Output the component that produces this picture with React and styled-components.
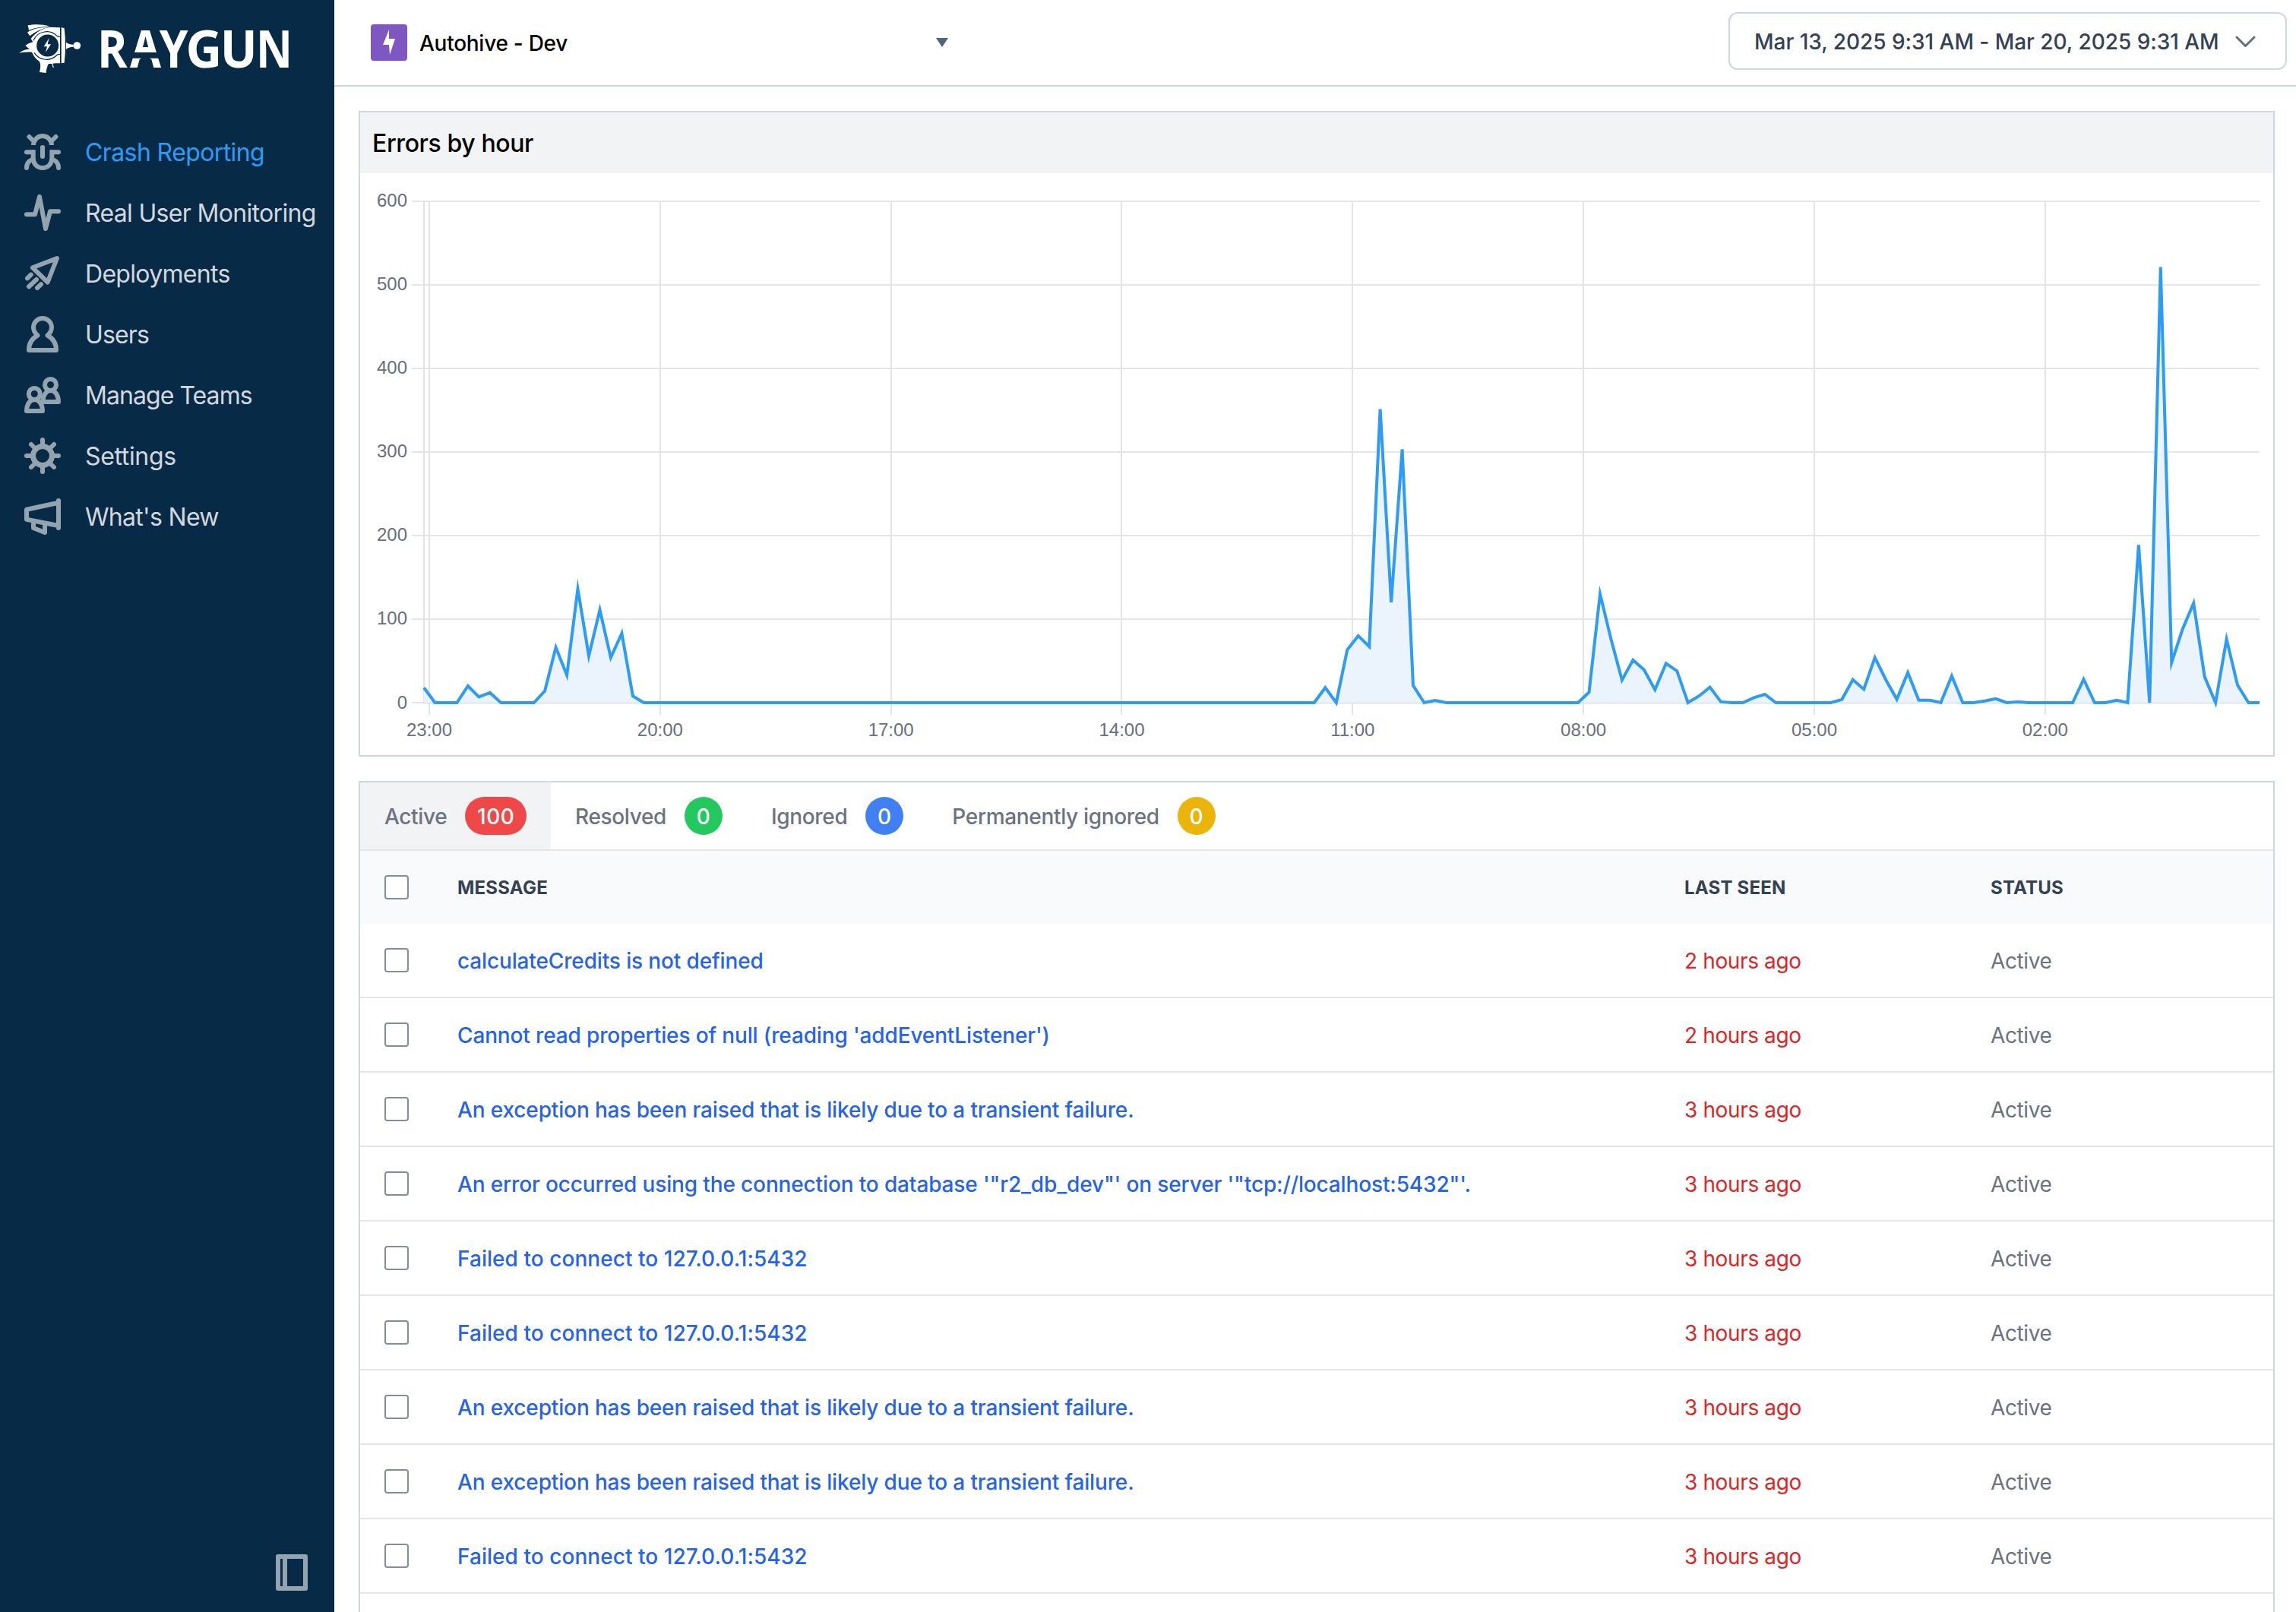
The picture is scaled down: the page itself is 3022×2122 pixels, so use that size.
import React, { useState } from "react";
import styled, { createGlobalStyle } from "styled-components";

const GlobalStyle = createGlobalStyle`
  * {
    box-sizing: border-box;
  }

  body {
    margin: 0;
    background: #fff;
    font-family: Inter, "Liberation Sans", sans-serif;
    -webkit-font-smoothing: antialiased;
  }
`;

const Page = styled.div`
  display: flex;
  width: 3022px;
  height: 2122px;
  overflow: hidden;
`;

const Sidebar = styled.aside`
  display: flex;
  flex-direction: column;
  flex: none;
  width: 440px;
  background: #072a47;
`;

const LogoLink = styled.a`
  display: block;
  height: 160px;
`;

const Nav = styled.nav`
  display: flex;
  flex-direction: column;
  flex: 1;
`;

const NavItem = styled.a`
  display: flex;
  align-items: center;
  gap: 32px;
  height: 80px;
  padding-left: 32px;
  font-size: 32px;
  letter-spacing: ${({ $tracking }) => $tracking}px;
  white-space: nowrap;
  cursor: pointer;
  color: ${({ $active }) => ($active ? "#2e9bf4" : "#d3d8dd")};
`;

const NavLabel = styled.span`
  padding-top: 1px;
`;

const StrokeIcon = styled.svg`
  flex: none;
  fill: none;
  stroke: #93a4ae;
  stroke-width: 6;
  stroke-linecap: round;
  stroke-linejoin: round;
`;

const SidebarFooter = styled.div`
  display: flex;
  justify-content: flex-end;
  padding: 0 35px 28px 0;
`;

const Main = styled.main`
  display: flex;
  flex-direction: column;
  flex: 1;
  min-width: 0;
`;

const TopBar = styled.header`
  display: flex;
  justify-content: space-between;
  flex: none;
  height: 114px;
  padding: 16px 12px 0 48px;
  border-bottom: 2px solid #d0d6dd;
`;

const AppPicker = styled.div`
  display: flex;
  align-items: center;
  width: 760px;
  height: 80px;
`;

const AppIcon = styled.span`
  display: flex;
  align-items: center;
  justify-content: center;
  width: 48px;
  height: 48px;
  border-radius: 4px;
  background: #7e57c2;
`;

const AppName = styled.span`
  flex: 1;
  padding: 2px 0 0 16px;
  font-size: 28px;
  font-weight: 500;
  letter-spacing: -0.27px;
  color: #000;
`;

const DateRange = styled.button`
  display: flex;
  align-items: center;
  justify-content: space-between;
  width: 735px;
  height: 76px;
  padding: 2px 39px 0 32px;
  border: 2px solid #d0d6dd;
  border-radius: 12px;
  background: #fff;
  font-family: inherit;
  font-size: 28px;
  font-weight: 500;
  letter-spacing: -0.03px;
  white-space: nowrap;
  color: #334155;
`;

const Content = styled.div`
  display: flex;
  flex-direction: column;
  gap: 32px;
  padding: 32px 28px 0 32px;
`;

const Panel = styled.section`
  flex: none;
  border: 2px solid #d0d6dd;
  background: #fff;
`;

const PanelTitle = styled.h2`
  display: flex;
  align-items: center;
  height: 80px;
  margin: 0;
  padding: 1px 0 0 16px;
  background: #f2f3f5;
  font-size: 32px;
  font-weight: 500;
  letter-spacing: -0.4px;
  color: #000;
`;

const ChartSvg = styled.svg`
  display: block;

  text {
    font-family: "Liberation Sans", Arial, sans-serif;
    font-size: 24px;
    fill: #666f7b;
  }
`;

const Tabs = styled.div`
  display: flex;
  height: 90px;
  border-bottom: 2px solid #e5e5e5;
`;

const Tab = styled.button`
  display: flex;
  align-items: center;
  gap: 24px;
  padding: 0 32px;
  border: none;
  background: ${({ $active }) => ($active ? "#f2f3f5" : "transparent")};
  font-family: inherit;
  font-size: 28px;
  font-weight: 500;
  letter-spacing: -0.34px;
  color: #6b7280;
  cursor: pointer;
`;

const TabLabel = styled.span`
  padding-top: 2px;
`;

const TabBadge = styled.span`
  display: flex;
  align-items: center;
  justify-content: center;
  min-width: 49.5px;
  height: 50px;
  padding: 2px 15.7px 0;
  border-radius: 25px;
  background: ${({ $color }) => $color};
  letter-spacing: 0.5px;
  color: #fff;
`;

const Row = styled.div`
  display: grid;
  grid-template-columns: 96px 1615px 403px 1fr;
  align-items: center;
  height: 98px;
  padding: 0 0 0 32px;
  border-bottom: 2px solid #e5e5e5;
  font-size: 28px;
  letter-spacing: -0.37px;
  white-space: nowrap;
`;

const HeadRow = styled(Row)`
  height: 96px;
  border-bottom: none;
  background: #f9fafc;
  font-size: 24px;
  font-weight: 700;
  letter-spacing: 0.2px;
  text-transform: uppercase;
  color: #334155;
`;

const Checkbox = styled.input`
  appearance: none;
  width: 32px;
  height: 32px;
  margin: 0;
  border: 2px solid #858d99;
  border-radius: 4px;
  background: #fff;
`;

const Message = styled.a`
  padding-top: 2px;
  font-weight: 500;
  letter-spacing: ${({ $tracking }) => $tracking ?? -0.14}px;
  color: #2563eb;
`;

const LastSeen = styled.span`
  padding-top: 2px;
  color: #dc2626;
`;

const Status = styled.span`
  padding-top: 2px;
  color: #6b7280;
`;

// letter, x, horizontal scale
const LETTERS = [
  ["R", 383.8, 0.883],
  ["A", 513, 0.872],
  ["Y", 629, 0.888],
  ["G", 733.5, 0.968],
  ["U", 869.5, 0.95],
  ["N", 1011, 0.865],
];

function Logo() {
  return (
    <svg width="440" height="110" viewBox="0 0 1320 330" fill="#fff">
      {/* fins */}
      <path d="M110 100C135 95 168 95 196 104C165 105 135 110 114 119Z" />
      <path d="M108 128C125 114 160 107 192 107C165 113 140 124 118 142Z" />
      {/* body */}
      <path d="M122 153C140 128 172 107 202 107L237 109V250C225 250 214 250 208 251L213 266L209 267L205 252L192 252C186 262 183 274 182 288L156 285C160 270 162 256 156 243C142 234 132 220 126 206C108 205 92 206 76 209C88 199 103 194 117 194L100 180C110 173 120 168 130 166Z" />
      <path d="M242 108L254 112Q262 180 254 248L242 250Z" />
      <path d="M261 167Q272 176 290 176V185Q272 185 261 194Z" />
      <circle cx="304" cy="180" r="14.5" />
      {/* lens */}
      <path
        d="M132 160A57 57 0 0 1 226 143L238 145M135 208A57 57 0 0 0 226 216L238 214"
        fill="none"
        stroke="#072a47"
        strokeWidth="3.5"
      />
      <circle cx="188" cy="180" r="47" fill="#072a47" />
      <circle cx="188" cy="180" r="46" fill="none" stroke="#fff" strokeWidth="5" />
      <path d="M194 150L173 184H186L180 207L201 175H188Z" />
      {/* wordmark */}
      {LETTERS.map(([letter, x, scale]) => (
        <text
          key={letter}
          transform={`translate(${x} 268) scale(${scale} 1)`}
          fontFamily="Open Sans, sans-serif"
          fontWeight="700"
          fontSize="204.5"
        >
          {letter}
        </text>
      ))}
      {/* split through the A */}
      <path d="M510 207H645V230H510ZM556 228H593V238H556Z" fill="#072a47" />
      <path d="M548 186H602V207H548Z" />
    </svg>
  );
}

const ICONS = {
  bug: (
    <>
      <path d="M12 15A12 12 0 0 1 36 15" strokeLinecap="butt" />
      <path d="M6.5 4L11.5 9M41.5 4L36.5 9M24 18V30" />
      <path d="M3 24.3H11M45 24.3H37" />
      <path d="M11.7 21.3V32C11.7 40 17 45 24 45S36.3 40 36.3 32V21.3" strokeLinecap="butt" />
      <path d="M3 45C3 40 5 36.5 9.5 34.5M45 45C45 40 43 36.5 38.5 34.5" />
    </>
  ),
  pulse: <path d="M3 26.3H14L20 3L28 45L34 22.3H45" />,
  rocket: (
    <path d="M43 4L11 16.3L30.7 35.5ZM4 30.3L8.7 25.7M6 41.3L16 32M17 43L22 38.3" />
  ),
  user: (
    <path d="M6 45C6 35 11 29 17.5 25.5C14 22.5 12 19 12 15A12 12 0 0 1 36 15C36 19 34 22.5 30.5 25.5C37 29 42 35 42 45Z" />
  ),
  team: (
    <>
      <circle cx="34.5" cy="10.5" r="7.5" />
      <circle cx="13.3" cy="22.5" r="7.5" />
      <path d="M24.5 33H45C45 25 41 18 34.7 18S24.5 25 24.5 33Z" />
      <path d="M3 45H24C24 37 20 30 13.5 30S3 37 3 45Z" />
    </>
  ),
  gear: (
    <>
      <circle cx="24" cy="24" r="12.5" strokeWidth="7" />
      <path d="M24 3V10M24 38V45M3 24H10M38 24H45M9 9L14 14M34 34L39 39M39 9L34 14M14 34L9 39" />
    </>
  ),
  megaphone: <path d="M45 3V39M45 5.7L3 14.7V27.7L45 36M12 31V39L27 45V34" />,
};

const NAV_ITEMS = [
  { icon: "bug", label: "Crash Reporting", tracking: -0.6 },
  { icon: "pulse", label: "Real User Monitoring", tracking: -0.67 },
  { icon: "rocket", label: "Deployments", tracking: -0.7 },
  { icon: "user", label: "Users", tracking: -0.85 },
  { icon: "team", label: "Manage Teams", tracking: -0.95 },
  { icon: "gear", label: "Settings", tracking: -0.35 },
  { icon: "megaphone", label: "What's New", tracking: -0.7 },
];

const zeros = (n) => Array(n).fill(0);

// error counts, one point for every step of the time axis
const POINTS = [
  18, 0, 0, 0, 20, 7, 12, 0, 0, 0, 0, 14, 66, 33, 136, 56, 111, 54, 83, 8,
  ...zeros(62),
  18, 0, 63, 80, 67, 351, 120, 303, 20.5, 0, 2.7,
  ...zeros(13),
  12.5, 130, 76, 27, 51, 39.5, 15.5, 47, 38, 0, 8, 18.5, 1, 0, 0, 6, 10,
  ...zeros(6),
  3.8, 27.5, 16, 54, 27.5, 4, 36, 3, 3, 0, 32, 0, 0, 2, 4.6, 0, 1, 0, 0, 0, 0, 0,
  28, 0, 0, 3, 0, 188.5, 0, 521, 48, 88, 119, 31, 0, 76, 21, 0, 0,
];

const Y_TICKS = [600, 500, 400, 300, 200, 100, 0];
const X_TICKS = ["23:00", "20:00", "17:00", "14:00", "11:00", "08:00", "05:00", "02:00"];

const plot = { left: 84, right: 2500, top: 36.5, bottom: 697 };

function ErrorsChart() {
  const step = (plot.right - plot.left) / (POINTS.length - 1);
  const yOf = (value) => plot.bottom - (value * (plot.bottom - plot.top)) / 600;
  const xOfTick = (i) => 91 + i * 303.83;
  const line = POINTS.map((v, i) => `${(plot.left + i * step).toFixed(1)},${yOf(v).toFixed(1)}`).join(" ");

  return (
    <ChartSvg width="2518" height="766">
      <g stroke="#e5e5e6" strokeWidth="2">
        {Y_TICKS.map((tick) => (
          <line key={tick} x1="68" x2={plot.right} y1={Math.round(yOf(tick))} y2={Math.round(yOf(tick))} />
        ))}
        {X_TICKS.map((tick, i) => (
          <line key={tick} x1={Math.round(xOfTick(i))} x2={Math.round(xOfTick(i))} y1={plot.top} y2="713" />
        ))}
        <line x1={plot.left} x2={plot.left} y1={plot.top} y2={plot.bottom} />
      </g>
      <polygon points={`${plot.left},${plot.bottom} ${line} ${plot.right},${plot.bottom}`} fill="#ebf3fd" />
      <line x1={plot.left} x2={plot.right} y1="697.5" y2="697.5" stroke="#cdd5dd" />
      <polyline points={line} fill="none" stroke="#2e9bf4" strokeWidth="4" strokeMiterlimit="10" />
      {Y_TICKS.map((tick) => (
        <text key={tick} x="62" y={yOf(tick) + 7.5} textAnchor="end">
          {tick}
        </text>
      ))}
      {X_TICKS.map((tick, i) => (
        <text key={tick} x={xOfTick(i)} y="741" textAnchor="middle">
          {tick}
        </text>
      ))}
    </ChartSvg>
  );
}

const TABS = [
  { label: "Active", count: 100, color: "#ef4848" },
  { label: "Resolved", count: 0, color: "#25c75f" },
  { label: "Ignored", count: 0, color: "#4080f3" },
  { label: "Permanently ignored", count: 0, color: "#eab40b" },
];

const TRANSIENT = "An exception has been raised that is likely due to a transient failure.";
const REFUSED = "Failed to connect to 127.0.0.1:5432";

const ERRORS = [
  { message: "calculateCredits is not defined", seen: "2 hours ago" },
  { message: "Cannot read properties of null (reading 'addEventListener')", seen: "2 hours ago" },
  { message: TRANSIENT, seen: "3 hours ago" },
  {
    message: `An error occurred using the connection to database '"r2_db_dev"' on server '"tcp://localhost:5432"'.`,
    seen: "3 hours ago",
  },
  { message: REFUSED, seen: "3 hours ago", tracking: 0.05 },
  { message: REFUSED, seen: "3 hours ago", tracking: 0.05 },
  { message: TRANSIENT, seen: "3 hours ago" },
  { message: TRANSIENT, seen: "3 hours ago" },
  { message: REFUSED, seen: "3 hours ago", tracking: 0.05 },
];

export default function App() {
  const [tab, setTab] = useState("Active");

  return (
    <Page>
      <GlobalStyle />
      <Sidebar>
        <LogoLink>
          <Logo />
        </LogoLink>
        <Nav>
          {NAV_ITEMS.map(({ icon, label, tracking }, i) => (
            <NavItem key={label} $active={i === 0} $tracking={tracking}>
              <StrokeIcon width="48" height="48">
                {ICONS[icon]}
              </StrokeIcon>
              <NavLabel>{label}</NavLabel>
            </NavItem>
          ))}
        </Nav>
        <SidebarFooter>
          <StrokeIcon width="42" height="48">
            <path d="M3 3H39V45H3ZM12 3V45" />
          </StrokeIcon>
        </SidebarFooter>
      </Sidebar>
      <Main>
        <TopBar>
          <AppPicker>
            <AppIcon>
              <svg width="18" height="34" viewBox="0 0 18 34" fill="#fff">
                <path d="M9 0L1 20H9L10 33L17 12H9Z" />
              </svg>
            </AppIcon>
            <AppName>Autohive - Dev</AppName>
            <svg width="16" height="12" fill="#52667a">
              <path d="M0 0H16L8 12Z" />
            </svg>
          </AppPicker>
          <DateRange>
            Mar 13, 2025 9:31 AM - Mar 20, 2025 9:31 AM
            <svg width="27" height="16" fill="none" stroke="#64707f" strokeWidth="3" strokeLinecap="round" strokeLinejoin="round">
              <path d="M2 2L13.5 13.5L25 2" />
            </svg>
          </DateRange>
        </TopBar>
        <Content>
          <Panel>
            <PanelTitle>Errors by hour</PanelTitle>
            <ErrorsChart />
          </Panel>
          <Panel>
            <Tabs>
              {TABS.map(({ label, count, color }) => (
                <Tab key={label} $active={label === tab} onClick={() => setTab(label)}>
                  <TabLabel>{label}</TabLabel>
                  <TabBadge $color={color}>{count}</TabBadge>
                </Tab>
              ))}
            </Tabs>
            <HeadRow>
              <Checkbox type="checkbox" />
              <span>Message</span>
              <span>Last seen</span>
              <span>Status</span>
            </HeadRow>
            {ERRORS.map(({ message, seen, tracking }, i) => (
              <Row key={i}>
                <Checkbox type="checkbox" />
                <Message $tracking={tracking}>{message}</Message>
                <LastSeen>{seen}</LastSeen>
                <Status>Active</Status>
              </Row>
            ))}
            <Row />
          </Panel>
        </Content>
      </Main>
    </Page>
  );
}
